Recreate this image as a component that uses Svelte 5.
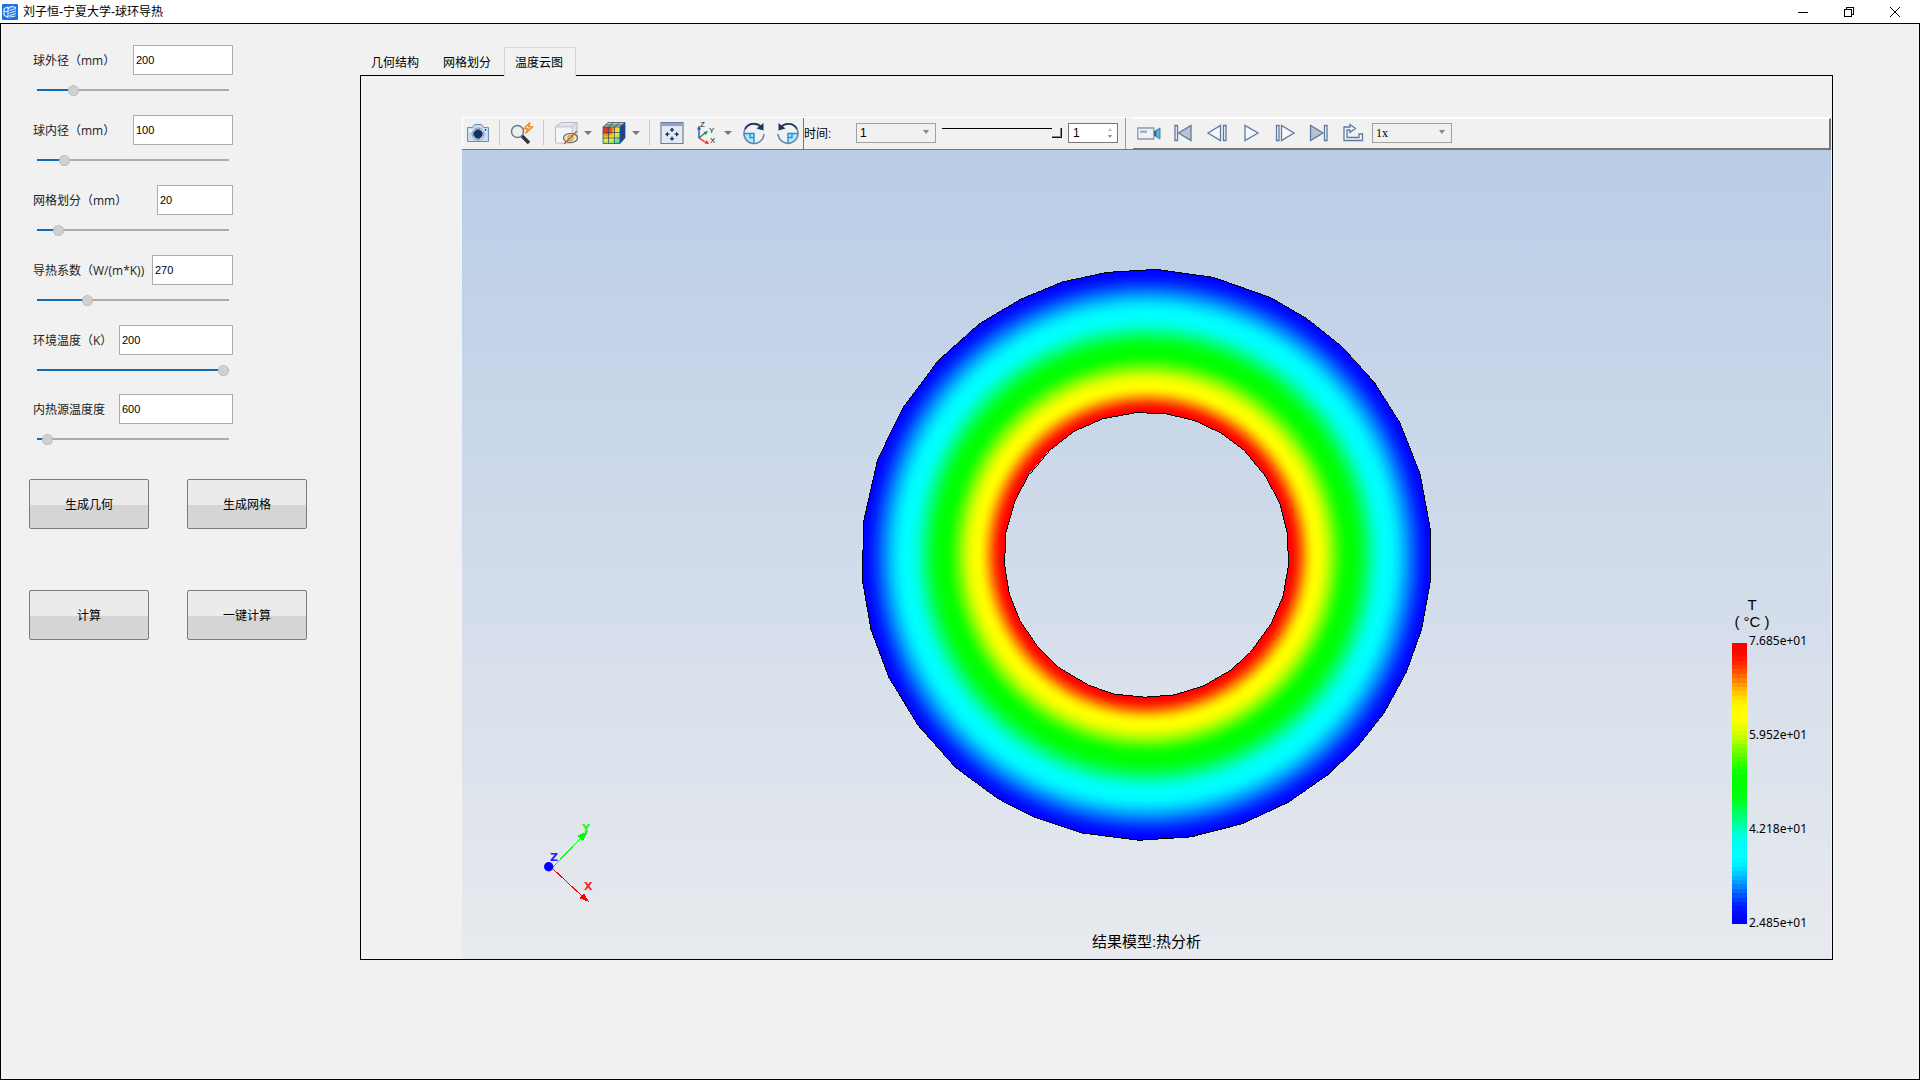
<script>
  const fields = [
    { id: 'outer', label: '球外径（mm）', value: '200', size: 'w100', pos: 17 },
    { id: 'inner', label: '球内径（mm）', value: '100', size: 'w100', pos: 12 },
    { id: 'mesh', label: '网格划分（mm）', value: '20', size: 'w76', pos: 9 },
    { id: 'cond', label: '导热系数（W/(m*K))', value: '270', size: 'w81', pos: 25 },
    { id: 'env', label: '环境温度（K）', value: '200', size: 'w114', pos: 100 },
    { id: 'heat', label: '内热源温度度', value: '600', size: 'w114', pos: 3 }
  ];
  const actions = ['生成几何', '生成网格', '计算', '一键计算'];
  const tabs = ['几何结构', '网格划分', '温度云图'];
  let active = $state(2);

  const palette = [[255, 0, 0], [255, 255, 0], [0, 255, 0], [0, 255, 255], [0, 0, 255]];

  // Smoothly eased colour at t in 0..4 along the palette
  function colorAt(t) {
    const i = Math.min(3, Math.floor(t));
    const e = 0.5 - 0.5 * Math.cos(Math.PI * (t - i));
    const c = palette[i].map((v, k) => Math.round(v + (palette[i + 1][k] - v) * e));
    return `rgb(${c.join(',')})`;
  }

  const radii = [0.5, 0.594, 0.711, 0.841, 1];
  const stops = Array.from({ length: 33 }, (_, n) => {
    const t = n / 8;
    const i = Math.min(3, Math.floor(t));
    return { offset: radii[i] + (radii[i + 1] - radii[i]) * (t - i), color: colorAt(t) };
  });
  const bands = Array.from({ length: 64 }, (_, n) => colorAt((n / 63) * 4));
  const ticks = ['7.685e+01', '5.952e+01', '4.218e+01', '2.485e+01'];

  const outerRing = 'M800 48L950 69 1100 122 1194 177 1286 250 1370 343 1437 449 1490 583 1517 730 1517 862 1494 988 1454 1100 1396 1207 1324 1298 1250 1368 1145 1441 1024 1497 892 1531 755 1540 606 1521 482 1480 386 1431 276 1350 178 1240 102 1115 55 990 32 858 36 705 72 546 138 410 230 287 338 190 446 126 555 81 670 56Z';
  const innerRing = 'M750 422L828 426 900 443 970 476 1030 521 1087 590 1124 662 1143 738 1146 820 1132 902 1100 975 1046 1049 994 1096 925 1136 848 1160 770 1166 690 1158 624 1135 545 1088 490 1033 444 966 416 895 404 820 407 738 431 653 468 583 518 524 586 471 662 438Z';
</script>

<div class="window">
  <header class="titlebar">
    <svg class="logo" viewBox="0 0 16 16" aria-hidden="true">
      <rect width="16" height="16" rx="1" fill="#1b74e4" />
      <path d="M2 4.500l4-1.500v10M2 4.500v7M2 8l4-1M6 5l3.500-2.500L14 3.500M7.500 6.500L14 4.500M7.500 9L14 7M7.500 11.500L14 9.500M7.500 13L13.500 12M2.500 11.500l4 2" fill="none" stroke="#e6f1ff" stroke-width="1.200" />
    </svg>
    <span class="title">刘子恒-宁夏大学-球环导热</span>
    <div class="winbtns">
      <button aria-label="最小化"><svg viewBox="0 0 10 10"><path d="M0 5.500h10" /></svg></button>
      <button aria-label="还原"><svg viewBox="0 0 10 10"><path d="M.5 2.500h7v7h-7zM2.500 2.500v-2h7v7h-2" /></svg></button>
      <button aria-label="关闭"><svg class="smooth" viewBox="0 0 10 10"><path d="M0 0l10 10M10 0L0 10" /></svg></button>
    </div>
  </header>

  <div class="body">
    <aside>
      <form class="params">
        {#each fields as f (f.id)}
          <div class="field">
            <div class="row">
              <label for={f.id}>{f.label}</label>
              <input id={f.id} class={f.size} type="text" value={f.value} />
            </div>
            <input class="slide" type="range" aria-label={f.label} min="0" max="100" value={f.pos} style="--fill: {f.pos}%" />
          </div>
        {/each}
      </form>
      <div class="actions">
        {#each actions as a}<button>{a}</button>{/each}
      </div>
    </aside>

    <main>
      <div class="tabs" role="tablist">
        {#each tabs as t, i}
          <button role="tab" aria-selected={active === i} class:active={active === i} onclick={() => (active = i)}>{t}</button>
        {/each}
      </div>
      <section class="frame">
        <div class="toolbar">
          <div class="group first">
            <button class="tool" aria-label="截图">
              <svg viewBox="0 0 24 24"><path d="M1.500 6.500h5l2-3h7l2 3h5v14h-21z" fill="#c9dcf0" stroke="#6f8bb3" /><path d="M3 8h18v3H3z" fill="#e9f2fb" /><circle cx="12" cy="13" r="6" fill="#f4f8fc" stroke="#7d93b4" /><circle cx="12" cy="13" r="4.500" fill="#14305e" stroke="#4a6795" /><circle cx="19.500" cy="9" r="1" fill="#24416f" /></svg>
            </button>
            <span class="sep"></span>
            <button class="tool" aria-label="快速缩放">
              <svg viewBox="0 0 24 24"><path d="M12 15l7 7" stroke="#333" stroke-width="3.500" /><circle cx="7.500" cy="10.500" r="6" fill="#edf0f2" stroke="#737980" stroke-width="1.500" /><path d="M20 1.500l-6 6 4 .5-2.500 4.500 7-6.500-4-.5z" fill="#fde2a8" stroke="#ec8a1c" stroke-width="1.300" /></svg>
            </button>
            <span class="sep"></span>
            <button class="tool drop" aria-label="显示隐藏">
              <svg viewBox="0 0 24 24"><path d="M1.500 6l6-4.500H23V16l-5 6H1.500z" fill="#e1e4eb" stroke="#b4b9c6" /><path d="M1.500 6H18l5-4.500M18 6v16" fill="none" stroke="#b4b9c6" /><path d="M2 6.500h15.500v15H2z" fill="#f4f5f8" /><ellipse cx="16.500" cy="17" rx="7" ry="4.500" fill="#fbe7a6" stroke="#5f667c" stroke-width="1.200" /><circle cx="16.500" cy="17" r="2.800" fill="#f7c565" stroke="#999" /><path d="M10 23L23 10" stroke="#d4502d" stroke-width="1.200" /></svg>
              <i></i>
            </button>
            <button class="tool drop" aria-label="云图">
              <svg viewBox="0 0 24 24">
                <defs>
                  <radialGradient id="cube" gradientUnits="userSpaceOnUse" cx="5" cy="8" r="20"><stop offset="0" stop-color="#e0251b" /><stop offset=".2" stop-color="#f04a1c" /><stop offset=".42" stop-color="#ffd21f" /><stop offset=".56" stop-color="#e6ee3a" /><stop offset=".76" stop-color="#6fe08a" /><stop offset="1" stop-color="#18bff0" /></radialGradient>
                </defs>
                <path d="M1 6l5-4.500h17L18 6z" fill="#b5cfa0" /><path d="M18 6l5-4.500V17l-5 5.500z" fill="#1649b8" /><path d="M1 6h17v16.500H1z" fill="url(#cube)" />
                <path d="M1 6h17v16.500H1zM6.500 6v16.500M12.500 6v16.500M1 11.500h17M1 17h17M1 6l5-4.500h17V17l-5 5.500M18 6l5-4.500M6.500 6l5-4.500M12.500 6l5-4.500M3.500 4h17v16M18 11.500l5-5M18 17l5-5" fill="none" stroke="#27405f" stroke-width=".7" />
              </svg>
              <i></i>
            </button>
            <span class="sep"></span>
            <button class="tool gap12" aria-label="适应窗口">
              <svg viewBox="0 0 24 24"><path d="M1 1.500h22v21H1z" fill="#e3eaf3" stroke="#6c7f9e" stroke-width="1.200" /><path d="M1.500 2h21v3h-21z" fill="#8fa3c0" /><path d="M12 6.500l2.500 3h-5zM12 20l2.500-3h-5zM5 13.200l3-2.500v5zM19 13.200l-3-2.500v5z" fill="#1d3765" /><path d="M12 9v2M12 15.500v2M8 13.200h1.500M14.500 13.200H16" stroke="#1d3765" stroke-width="1.300" /></svg>
            </button>
            <button class="tool drop tight" aria-label="坐标视图">
              <svg viewBox="0 0 24 24"><path d="M3 17V7" stroke="#2453b5" stroke-width="1.400" /><path d="M3 4.500l2 4H1z" fill="#2453b5" /><path d="M3 17l6-5" stroke="#15964b" stroke-width="1.400" /><path d="M12 10l-4.500 1 2.500 3z" fill="#15964b" /><path d="M3 17l6 4" stroke="#f0281e" stroke-width="1.400" /><path d="M13 23l-4.500-.5 2.300-3.500z" fill="#f0281e" /><g font-family="Liberation Sans" font-size="8" fill="#111"><text x="4" y="6">Z</text><text x="13" y="12">Y</text><text x="14" y="22">X</text></g></svg>
              <i></i>
            </button>
            <button class="tool" aria-label="顺时针旋转">
              <svg viewBox="0 0 24 24"><path d="M2 12.500h10v10A10 10 0 0 1 2 12.500z" fill="#b7e4fa" /><path d="M2 12.500h10v10M8 12.500v4h4" fill="none" stroke="#1797d8" stroke-width="1.400" /><path d="M20 6.500A10 10 0 1 0 22 13" fill="none" stroke="#6584a8" stroke-width="1.600" /><path d="M3 8A10 10 0 0 1 19 6" fill="none" stroke="#1f365c" stroke-width="1.700" /><path d="M21.500 2v7.500l-7-2z" fill="#1f365c" /></svg>
            </button>
            <button class="tool" aria-label="逆时针旋转">
              <svg viewBox="0 0 24 24"><path d="M22 12.500H12v10a10 10 0 0 0 10-10z" fill="#b7e4fa" /><path d="M22 12.500H12v10M16 12.500v4h-4" fill="none" stroke="#1797d8" stroke-width="1.400" /><path d="M21 8A10 10 0 1 1 2 13" fill="none" stroke="#6584a8" stroke-width="1.600" /><path d="M21 8A10 10 0 0 0 5 6" fill="none" stroke="#1f365c" stroke-width="1.700" /><path d="M2.500 2v7.500l7-2z" fill="#1f365c" /></svg>
            </button>
          </div>

          <div class="group time">
            <label for="step">时间:</label>
            <span class="combo"><select id="step"><option>1</option></select></span>
            <input class="timeline" type="range" min="0" max="1" value="1" aria-label="时间轴" />
            <span class="spin"><input type="text" value="1" aria-label="帧" /><b class="up"></b><b class="down"></b></span>
          </div>

          <div class="group play">
            <button class="tool" aria-label="录制">
              <svg viewBox="0 0 24 24"><path d="M.8 7h16v11h-16z" fill="#eef1f6" stroke="#8a99b3" stroke-width="1.300" /><path d="M3 9.500h7v2.500H3z" fill="#aab0bb" /><path d="M17 10l2.500-1v7L17 15z" fill="#4d6180" /><path d="M19 9.500l4-2.500v11l-4-2.500z" fill="#58b7dd" stroke="#2e6c94" stroke-width=".8" /></svg>
            </button>
            <button class="tool" aria-label="首帧"><svg viewBox="0 0 24 24" class="pl"><path d="M4 4.500h2.500v15H4z" /><path class="dim" d="M20 4.500v15L7.500 12z" /></svg></button>
            <button class="tool" aria-label="上一帧"><svg viewBox="0 0 24 24" class="pl"><path d="M15.500 4.500v15L3 12z" /><path d="M18.500 4.500H21v15h-2.500z" /></svg></button>
            <button class="tool" aria-label="播放"><svg viewBox="0 0 24 24" class="pl"><path d="M6 4.500v15L19 12z" /></svg></button>
            <button class="tool" aria-label="下一帧"><svg viewBox="0 0 24 24" class="pl"><path d="M3.500 4.500H6v15H3.500z" /><path d="M8.500 4.500v15L21 12z" /></svg></button>
            <button class="tool" aria-label="末帧"><svg viewBox="0 0 24 24" class="pl"><path class="dim" d="M3.500 4.500v15L16 12z" /><path d="M17.500 4.500H20v15h-2.500z" /></svg></button>
            <button class="tool" aria-label="循环"><svg viewBox="0 0 24 24" class="pl"><path d="M3 19.500V6h6V3.500l5.500 4-5.500 4V9H6v7.500h12V13h3.500v6.500z" /></svg></button>
            <span class="combo"><select class="serif" aria-label="速度"><option>1x</option></select></span>
          </div>
        </div>

        <div class="scene">
          <svg class="ring" viewBox="0 0 1568 1568" role="img" aria-label="温度云图">
            <defs>
              <radialGradient id="heatmap" gradientUnits="userSpaceOnUse" cx="775" cy="794" r="746">
                {#each stops as s}<stop offset={s.offset} stop-color={s.color} />{/each}
              </radialGradient>
            </defs>
            <path d={outerRing + innerRing} fill="url(#heatmap)" fill-rule="evenodd" stroke="#000" stroke-width="1" vector-effect="non-scaling-stroke" shape-rendering="crispEdges" />
          </svg>

          <svg class="axes" viewBox="0 0 60 90" aria-hidden="true">
            <g shape-rendering="crispEdges">
              <path d="M13 47L41 18" stroke="#0f0" /><path d="M48 11L37 16l6 5z" fill="#0f0" />
              <path d="M12 48L42 76" stroke="#f00" /><path d="M49 82L39 78l5-5z" fill="#f00" />
            </g>
            <circle cx="8.700" cy="46.700" r="4.700" fill="#00f" />
            <g font-family="DejaVu Sans" font-weight="700" font-size="11"><text x="42" y="12" fill="#2cf02c">Y</text><text x="10" y="41" fill="#2020ff">Z</text><text x="44" y="70" fill="#f22">X</text></g>
          </svg>

          <div class="legend">
            <div class="unit"><span>T</span><span>( °C )</span></div>
            <div class="scale">
              <svg class="bar" viewBox="0 0 15 64" preserveAspectRatio="none" shape-rendering="crispEdges" aria-hidden="true">
                {#each bands as c, i}<rect y={i} width="15" height="1" fill={c} />{/each}
              </svg>
              <div class="ticks">{#each ticks as t}<span>{t}</span>{/each}</div>
            </div>
          </div>

          <div class="caption">结果模型:热分析</div>
        </div>
      </section>
    </main>
  </div>
</div>

<style>
  :global(body) { margin: 0; }
  .window, .window * { box-sizing: border-box; }
  .window {
    min-height: 100vh;
    display: flex;
    flex-direction: column;
    background: #f1f1f1;
    color: #000;
    font: 12px/16px "Liberation Sans", "Noto Sans CJK SC", sans-serif;
  }
  button, input, select { font: inherit; color: inherit; margin: 0; padding: 0; }
  button { background: none; border: 0; }
  svg { display: block; }

  .titlebar { height: 23px; display: flex; align-items: center; padding: 0 2px; background: #fff; }
  .logo { width: 16px; height: 16px; }
  .title { margin-left: 5px; flex: 1; }
  .winbtns { display: flex; }
  .winbtns button { width: 46px; height: 20px; display: grid; place-items: center; }
  .winbtns svg { width: 10px; height: 10px; fill: none; stroke: #000; shape-rendering: crispEdges; }
  .winbtns .smooth { shape-rendering: auto; }

  .body { flex: 1; display: flex; border: 1px solid #000; }

  aside { width: 359px; flex: none; padding: 21px 0 0 28px; }
  .params { width: 204px; padding-left: 4px; display: flex; flex-direction: column; }
  .field { height: 70px; }
  .field:last-child { margin-top: -1px; }
  .row { display: flex; justify-content: space-between; align-items: center; height: 30px; white-space: nowrap; }
  .row label { color: #222; padding-top: 2px; font-family: "Open Sans", "Noto Sans CJK SC", sans-serif; }
  .row input { height: 30px; border: 1px solid #ababab; background: #fff; padding: 0 2px; font-size: 11px; }
  .w100 { width: 100px; }
  .w76 { width: 76px; }
  .w81 { width: 81px; }
  .w114 { width: 114px; }
  .slide { appearance: none; display: block; width: 192px; height: 10px; margin: 10px 0 0 4px; background: linear-gradient(to right, #0f6cbd var(--fill), #ababab var(--fill)) center / 100% 2px no-repeat; }
  .slide::-webkit-slider-thumb { appearance: none; width: 11px; height: 11px; border-radius: 50%; background: #d0d0d0; border: 1px dotted #aaa; }

  .actions { display: grid; grid-template-columns: 120px 120px; gap: 61px 38px; margin-top: 15px; }
  .actions button { height: 50px; padding-top: 2px; border: 1px solid #7c7c7c; border-radius: 2px; background: linear-gradient(#ebebeb 52%, #d5d5d5 52%); }

  main { flex: 1; min-width: 0; display: flex; flex-direction: column; padding: 23px 86px 119px 0; }
  .tabs { display: flex; height: 28px; }
  .tabs button { width: 72px; height: 29px; padding: 2px 2px 0 0; border: 1px solid transparent; }
  .tabs .active { border-color: #d5d5d5; border-bottom-color: #f1f1f1; background: #f1f1f1; z-index: 1; }
  .frame { flex: 1; border: 1px solid #000; padding: 41px 1px 0 101px; display: flex; flex-direction: column; }

  .toolbar { display: flex; height: 33px; border-top: 1px solid #fff; border-bottom: 1px solid #777; }
  .group { display: flex; align-items: center; padding-bottom: 2px; }
  .first { border-left: 1px solid #fff; border-right: 1px solid #777; padding: 0 3px 2px; width: 342px; }
  .tool { width: 24px; height: 24px; flex: none; margin-right: 10px; }
  .tool svg { width: 24px; height: 24px; flex: none; }
  .tool:has(+ .sep) { margin-right: 0; }
  .tool:last-of-type { margin-right: 0; }
  .drop { width: 38px; display: flex; align-items: center; gap: 6px; }
  .tight { width: 36px; gap: 4px; }
  .gap12 { margin-right: 12px; }
  i { border: 4px solid transparent; border-top-color: #777; border-bottom: 0; }
  .sep { width: 1px; height: 25px; margin: 0 10px 0 9px; background: #c8c8c8; }

  .time { width: 322px; border-right: 1px solid #999; }
  .time label { width: 52px; padding-top: 3px; }
  .combo { position: relative; width: 80px; height: 20px; }
  .combo::after { content: ""; position: absolute; right: 7px; top: 7px; border: 3px solid transparent; border-top: 4px solid #888; border-bottom: 0; pointer-events: none; }
  .combo select { appearance: none; width: 80px; height: 20px; border: 1px solid #a0a0a0; border-radius: 0; background: #f1f1f1; padding: 0 3px; display: block; }
  .combo .serif { font-family: "Liberation Serif", serif; }
  .timeline { appearance: none; width: 120px; height: 20px; margin: 0 6px; background: linear-gradient(#000, #000) 0 5px / 110px 1px no-repeat; }
  .timeline::-webkit-slider-thumb { appearance: none; width: 10px; height: 10px; background: #f1f1f1; border-right: 1px solid #111; border-bottom: 1px solid #111; box-shadow: inset -1px -1px #888; }
  .spin { position: relative; width: 50px; height: 20px; }
  .spin input { display: block; width: 50px; height: 20px; border: 1px solid #777; background: #fff; padding: 0 4px; }
  .up, .down { position: absolute; right: 6px; border: 2px solid transparent; }
  .up { top: 5px; border-bottom: 3px solid #bbb; border-top: 0; }
  .down { top: 12px; border-top: 3px solid #888; border-bottom: 0; }

  .play { flex: 1; margin-left: 7px; padding-left: 4px; border-top: 1px solid #fff; border-bottom: 1px solid #777; border-right: 2px solid #777; }
  .play .combo { margin-left: 7px; }
  .pl { fill: #f4f7fb; stroke: #6079a3; stroke-width: 1.300; }
  .dim { fill: #b9c2d0; }

  .scene { flex: 1; position: relative; display: grid; place-items: center; background: linear-gradient(#b9cde6, #e8eaee); }
  .ring { width: 600px; height: 600px; margin-top: -8px; margin-left: 7px; }
  .axes { position: absolute; left: 78px; bottom: 49px; width: 60px; height: 90px; }
  .legend { position: absolute; right: 21px; bottom: 35px; width: 78px; }
  .unit { display: flex; flex-direction: column; width: 40px; text-align: center; white-space: nowrap; margin-bottom: 13px; font-size: 15px; line-height: 17px; }
  .scale { display: flex; gap: 2px; height: 281px; }
  .bar { width: 15px; height: 281px; }
  .ticks { display: flex; flex-direction: column; justify-content: space-between; height: 294px; margin-top: -8px; font: 12px/12px "Noto Sans", sans-serif; }
  .caption { position: absolute; left: 0; right: 0; bottom: 7px; text-align: center; font-size: 15px; line-height: 20px; }
</style>
